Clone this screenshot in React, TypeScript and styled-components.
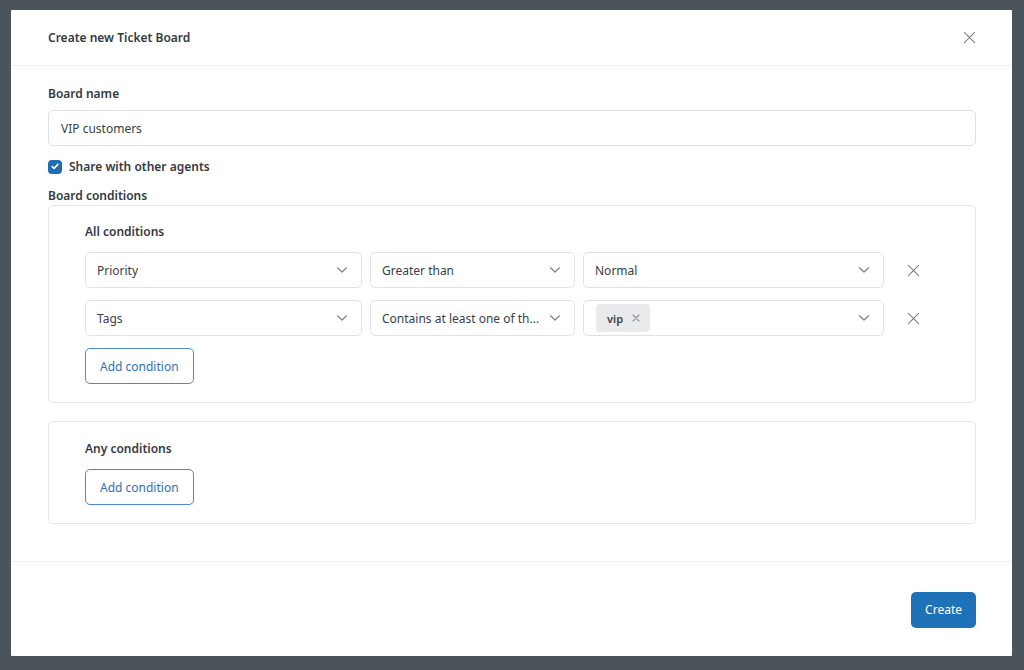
import React from 'react'
import styled, { createGlobalStyle } from 'styled-components'

const Global = createGlobalStyle`
  html, body {
    margin: 0;
    padding: 0;
    background: #4b535b;
  }
  body {
    font-family: "Noto Sans", "Open Sans", sans-serif;
    color: #333a40;
  }
`

const Backdrop = styled.div`
  width: 1024px;
  height: 670px;
  box-sizing: border-box;
  padding: 10px 12px 14px 11px;
  display: flex;
`

const Modal = styled.div`
  flex: 1;
  min-width: 0;
  background: #fff;
  display: flex;
  flex-direction: column;
  border-radius: 1px;
`

const Header = styled.div`
  flex-shrink: 0;
  height: 56px;
  box-sizing: border-box;
  display: flex;
  align-items: center;
  justify-content: space-between;
  padding: 0 35px 0 37px;
  border-bottom: 1px solid #eef0f1;
`

const Title = styled.h1`
  margin: 0;
  font-size: 12px;
  font-weight: 600;
  color: #343a40;
`

const IconButton = styled.button`
  border: none;
  background: none;
  padding: 0;
  width: 16px;
  height: 16px;
  display: flex;
  align-items: center;
  justify-content: center;
  color: #7b8288;
  cursor: pointer;
`

const Body = styled.div`
  flex: 1;
  padding: 19px 36px 37px 37px;
  border-bottom: 1px solid #eef0f1;
  display: flex;
  flex-direction: column;
`

const Label = styled.div<{ $mb?: number }>`
  font-size: 12px;
  font-weight: 600;
  color: #343a40;
  line-height: 17px;
  margin-bottom: ${p => p.$mb ?? 0}px;
`

const TextInput = styled.div`
  height: 36px;
  box-sizing: border-box;
  border: 1px solid #dfe2e5;
  border-radius: 5px;
  padding: 0 12px;
  display: flex;
  align-items: center;
  font-size: 12px;
  color: #3a4046;
`

const CheckRow = styled.label`
  display: flex;
  align-items: center;
  gap: 7px;
  line-height: 17px;
  margin: 12px 0 12px;
  font-size: 12px;
  font-weight: 600;
  color: #343a40;
`

const CheckBox = styled.span`
  width: 14px;
  height: 14px;
  border-radius: 4px;
  background: #1f6db3;
  display: flex;
  align-items: center;
  justify-content: center;
`

const Card = styled.div<{ $mb?: number; $pt: number }>`
  border: 1px solid #e3e6e8;
  border-radius: 5px;
  padding: ${p => p.$pt}px 36px 18px 36px;
  margin-bottom: ${p => p.$mb ?? 0}px;
  display: flex;
  flex-direction: column;
  gap: 12px;
`

const CardTitle = styled.div`
  font-size: 12px;
  font-weight: 600;
  color: #343a40;
  line-height: 17px;
`

const Row = styled.div`
  display: flex;
  align-items: center;
  gap: 8px;
`

const Select = styled.div<{ $w: number }>`
  width: ${p => p.$w}px;
  flex-shrink: 0;
  height: 36px;
  box-sizing: border-box;
  border: 1px solid #dfe2e5;
  border-radius: 5px;
  padding: 0 13px 0 11px;
  display: flex;
  align-items: center;
  justify-content: space-between;
  font-size: 12px;
  color: #3a4046;
  white-space: nowrap;
`

const SelectValue = styled.span`
  overflow: hidden;
  text-overflow: ellipsis;
  display: flex;
  align-items: center;
`

const Chip = styled.span`
  height: 28px;
  box-sizing: border-box;
  background: #e8eaec;
  border-radius: 4px;
  padding: 0 10px 0 11px;
  display: inline-flex;
  align-items: center;
  gap: 9px;
  font-size: 11px;
  font-weight: 600;
  color: #3a4046;
  margin-left: 1px;
`

const RemoveCell = styled.div`
  width: 42px;
  display: flex;
  justify-content: center;
  color: #7b8288;
`

const OutlineButton = styled.button`
  align-self: flex-start;
  height: 36px;
  padding: 0 14px;
  border: 1px solid #4d8ac6;
  border-radius: 5px;
  background: #fff;
  color: #2e72b5;
  font-family: inherit;
  font-size: 12px;
  cursor: pointer;
`

const Footer = styled.div`
  flex-shrink: 0;
  height: 95px;
  box-sizing: border-box;
  display: flex;
  justify-content: flex-end;
  align-items: center;
  padding: 0 36px;
`

const PrimaryButton = styled.button`
  height: 36px;
  padding: 0 14px;
  border: none;
  border-radius: 5px;
  background: #1f72b8;
  color: #fff;
  font-family: inherit;
  font-size: 12px;
  cursor: pointer;
`

const Cross = ({ size = 14 }: { size?: number }) => (
  <svg width={size} height={size} viewBox="0 0 14 14" fill="none" stroke="currentColor" strokeWidth="1.2" strokeLinecap="round">
    <path d="M1.5 1.5 L12.5 12.5 M12.5 1.5 L1.5 12.5" />
  </svg>
)

const Chevron = () => (
  <svg width="12" height="8" viewBox="0 0 12 8" fill="none" stroke="#7b8288" strokeWidth="1.2" strokeLinecap="round" strokeLinejoin="round">
    <path d="M1.5 1.8 L6 6 L10.5 1.8" />
  </svg>
)

const SelectBox = ({ w, children }: { w: number; children: React.ReactNode }) => (
  <Select $w={w}>
    <SelectValue>{children}</SelectValue>
    <Chevron />
  </Select>
)

export default function App() {
  return (
    <>
      <Global />
      <Backdrop>
        <Modal>
          <Header>
            <Title>Create new Ticket Board</Title>
            <IconButton aria-label="Close">
              <Cross size={13} />
            </IconButton>
          </Header>
          <Body>
            <Label $mb={8}>Board name</Label>
            <TextInput>VIP customers</TextInput>
            <CheckRow>
              <CheckBox>
                <svg width="8" height="7" viewBox="0 0 8 7" fill="none" stroke="#fff" strokeWidth="1.6" strokeLinecap="round" strokeLinejoin="round">
                  <path d="M1.2 3.6 L3.1 5.4 L6.8 1.4" />
                </svg>
              </CheckBox>
              Share with other agents
            </CheckRow>
            <Label $mb={1}>Board conditions</Label>
            <Card $mb={18} $pt={17}>
              <CardTitle>All conditions</CardTitle>
              <Row>
                <SelectBox w={277}>Priority</SelectBox>
                <SelectBox w={205}>Greater than</SelectBox>
                <SelectBox w={301}>Normal</SelectBox>
                <RemoveCell>
                  <Cross size={13} />
                </RemoveCell>
              </Row>
              <Row>
                <SelectBox w={277}>Tags</SelectBox>
                <SelectBox w={205}>Contains at least one of th...</SelectBox>
                <SelectBox w={301}>
                  <Chip>
                    vip
                    <svg width="8" height="8" viewBox="0 0 8 8" fill="none" stroke="#8a9096" strokeWidth="1.1" strokeLinecap="round">
                      <path d="M1 1 L7 7 M7 1 L1 7" />
                    </svg>
                  </Chip>
                </SelectBox>
                <RemoveCell>
                  <Cross size={13} />
                </RemoveCell>
              </Row>
              <OutlineButton>Add condition</OutlineButton>
            </Card>
            <Card $pt={18}>
              <CardTitle>Any conditions</CardTitle>
              <OutlineButton>Add condition</OutlineButton>
            </Card>
          </Body>
          <Footer>
            <PrimaryButton>Create</PrimaryButton>
          </Footer>
        </Modal>
      </Backdrop>
    </>
  )
}
